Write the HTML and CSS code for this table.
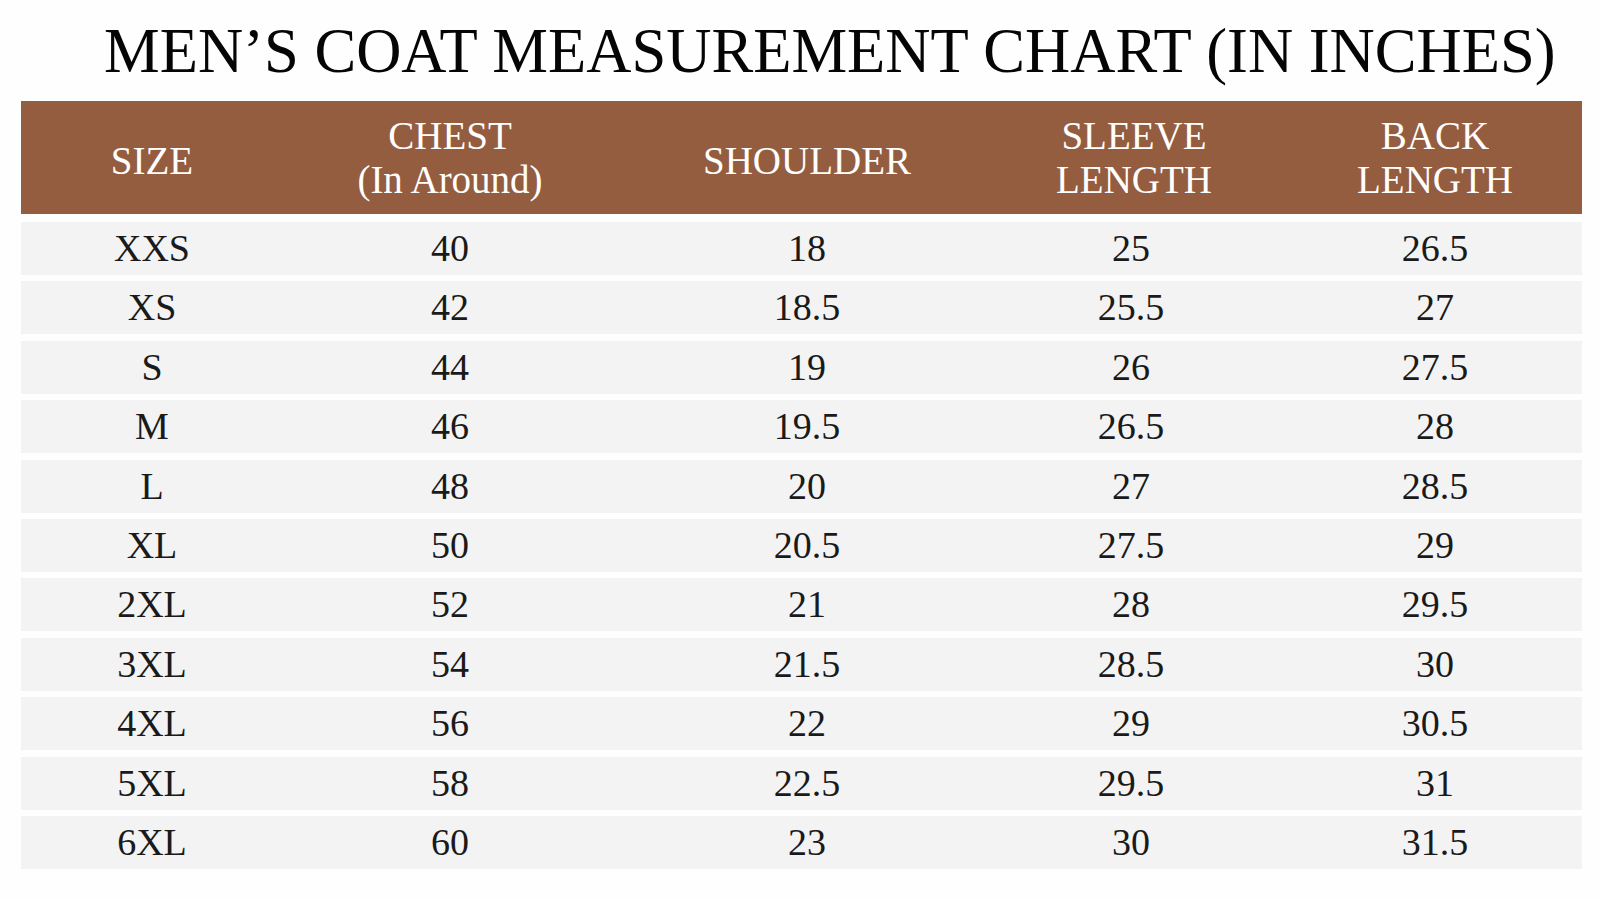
FILE: index.html
```html
<!DOCTYPE html>
<html lang="en">
<head>
<meta charset="utf-8">
<title>Men’s Coat Measurement Chart</title>
<link rel="stylesheet" href="styles.css">
</head>
<body>
<h1 class="title">MEN’S COAT MEASUREMENT CHART (IN INCHES)</h1>
<div class="chart">
  <div class="row head">
    <div class="cell single">SIZE</div>
    <div class="cell">CHEST<br>(In Around)</div>
    <div class="cell single">SHOULDER</div>
    <div class="cell">SLEEVE<br>LENGTH</div>
    <div class="cell">BACK<br>LENGTH</div>
  </div>
  <div class="body">
    <div class="row"><div class="cell">XXS</div><div class="cell">40</div><div class="cell">18</div><div class="cell">25</div><div class="cell">26.5</div></div>
    <div class="row"><div class="cell">XS</div><div class="cell">42</div><div class="cell">18.5</div><div class="cell">25.5</div><div class="cell">27</div></div>
    <div class="row"><div class="cell">S</div><div class="cell">44</div><div class="cell">19</div><div class="cell">26</div><div class="cell">27.5</div></div>
    <div class="row"><div class="cell">M</div><div class="cell">46</div><div class="cell">19.5</div><div class="cell">26.5</div><div class="cell">28</div></div>
    <div class="row"><div class="cell">L</div><div class="cell">48</div><div class="cell">20</div><div class="cell">27</div><div class="cell">28.5</div></div>
    <div class="row"><div class="cell">XL</div><div class="cell">50</div><div class="cell">20.5</div><div class="cell">27.5</div><div class="cell">29</div></div>
    <div class="row"><div class="cell">2XL</div><div class="cell">52</div><div class="cell">21</div><div class="cell">28</div><div class="cell">29.5</div></div>
    <div class="row"><div class="cell">3XL</div><div class="cell">54</div><div class="cell">21.5</div><div class="cell">28.5</div><div class="cell">30</div></div>
    <div class="row"><div class="cell">4XL</div><div class="cell">56</div><div class="cell">22</div><div class="cell">29</div><div class="cell">30.5</div></div>
    <div class="row"><div class="cell">5XL</div><div class="cell">58</div><div class="cell">22.5</div><div class="cell">29.5</div><div class="cell">31</div></div>
    <div class="row"><div class="cell">6XL</div><div class="cell">60</div><div class="cell">23</div><div class="cell">30</div><div class="cell">31.5</div></div>
  </div>
</div>
</body>
</html>
```

FILE: styles.css
```css
html, body {
  margin: 0;
  padding: 0;
  background: #fefefe;
}

body {
  width: 1600px;
  height: 900px;
  overflow: hidden;
  font-family: "Liberation Serif", "Times New Roman", serif;
  color: #1a1a1a;
}

.title {
  margin: 20px 0 0 0;
  padding-left: 104px;
  font-size: 62.6px;
  line-height: 62px;
  font-weight: normal;
  color: #050505;
  white-space: nowrap;
}

.chart {
  margin: 19px 0 0 21px;
  width: 1561px;
}

.row {
  display: grid;
  grid-template-columns: 262px 334px 380px 268px 317px;
  align-items: center;
}

.cell {
  text-align: center;
}

.cell:last-child {
  padding-left: 23px;
}

.head {
  height: 113px;
  background: #955d3f;
  color: #ffffff;
  font-size: 39px;
  line-height: 44px;
}

.head .cell:nth-child(4) {
  padding-left: 6px;
}

.head .single {
  padding-top: 6px;
}

.body {
  margin-top: 8px;
  display: flex;
  flex-direction: column;
  gap: 6.4px;
}

.body .row {
  height: 53px;
  background: #f3f3f3;
  font-size: 38px;
  line-height: 53px;
}
```
